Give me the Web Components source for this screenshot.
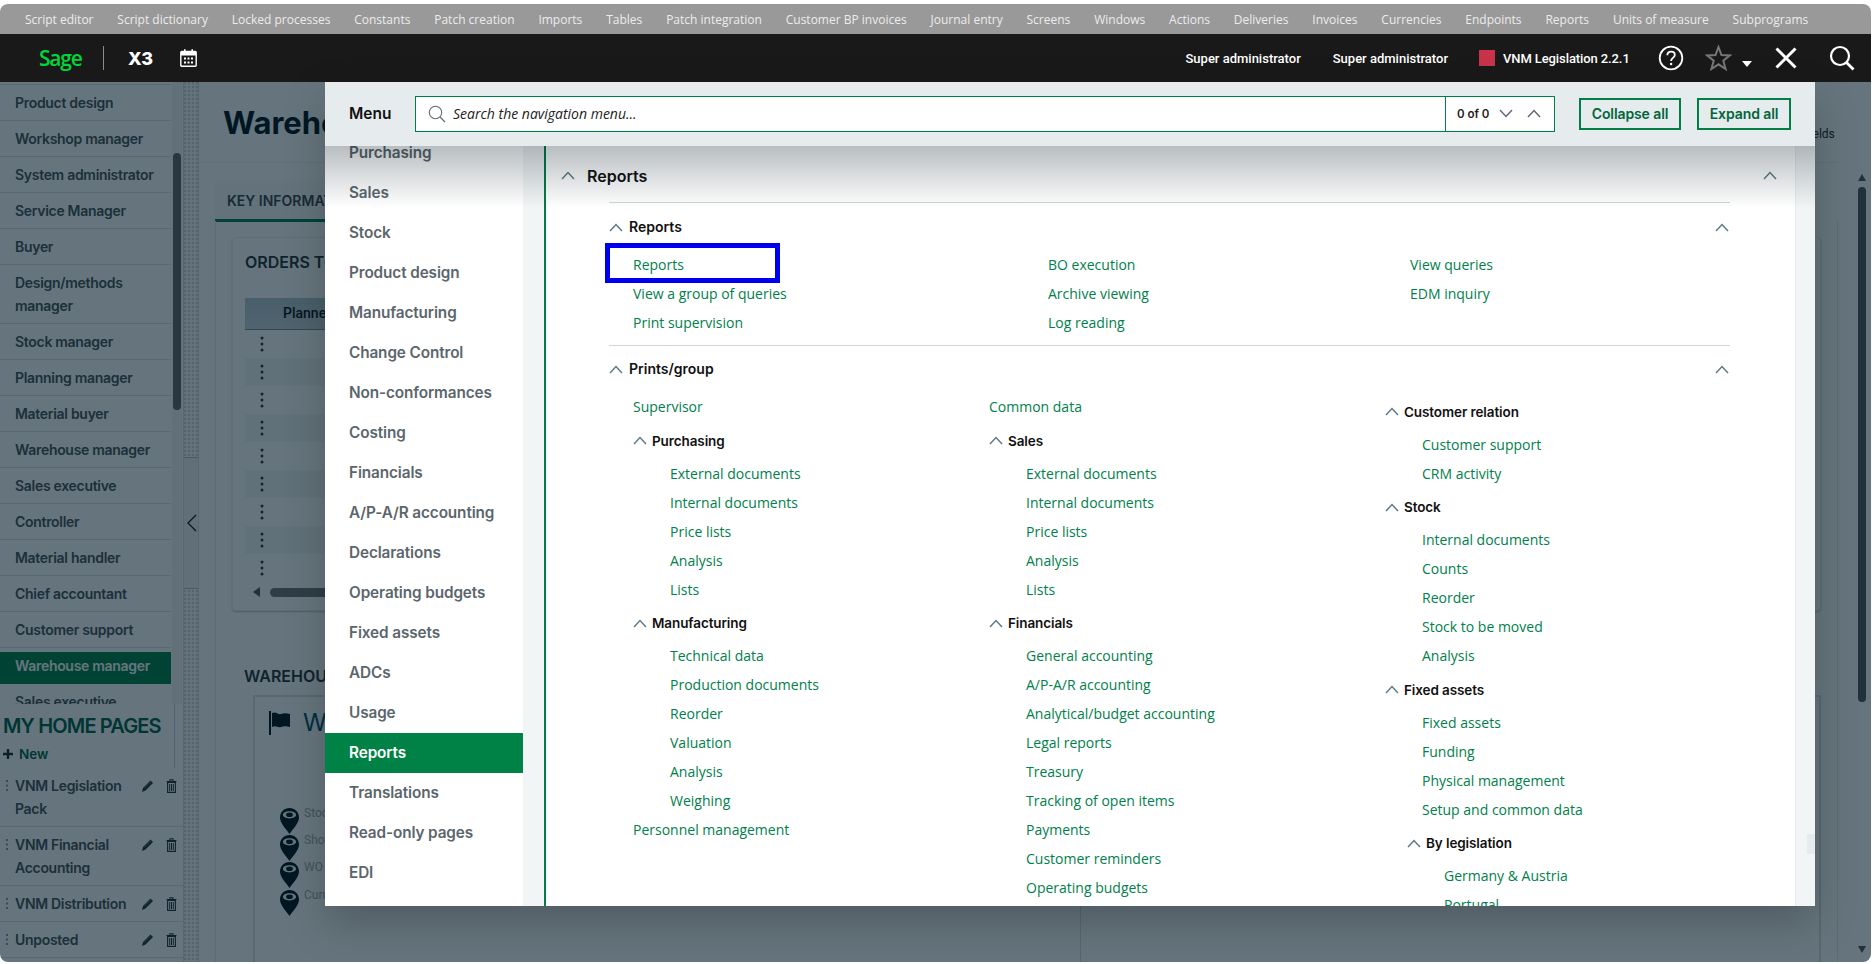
<!DOCTYPE html>
<html lang="en"><head><meta charset="utf-8"><title>Sage X3</title>
<style>
html,body{margin:0;padding:0;background:#fff;width:1872px;height:964px;overflow:hidden;font-family:"Open Sans",sans-serif}
</style></head><body>
<x3-app></x3-app>
<script>
const chevUp=(c='#5f7a87')=>`<svg width="14" height="9" viewBox="0 0 14 9" fill="none" style="display:block;flex:none"><path d="M1 8 L7 1.6 L13 8" stroke="${c}" stroke-width="1.5"/></svg>`;
const chevDown=(c='#5f7a87')=>`<svg width="14" height="9" viewBox="0 0 14 9" fill="none" style="display:block;flex:none"><path d="M1 1 L7 7.4 L13 1" stroke="${c}" stroke-width="1.5"/></svg>`;
class Base extends HTMLElement{
  constructor(){super();this.attachShadow({mode:'open'});}
  connectedCallback(){this.shadowRoot.innerHTML=this.render();}
}
customElements.define('top-links',class extends Base{render(){
  const items=['Script editor','Script dictionary','Locked processes','Constants','Patch creation','Imports','Tables','Patch integration','Customer BP invoices','Journal entry','Screens','Windows','Actions','Deliveries','Invoices','Currencies','Endpoints','Reports','Units of measure','Subprograms'];
  return `<style>:host{display:flex;height:30px;background:#999;color:#ececec;font:12px "Open Sans",sans-serif;align-items:center;gap:23.85px;padding-left:25px;white-space:nowrap;box-sizing:border-box}</style>`+items.map(i=>`<span>${i}</span>`).join('');
}});
customElements.define('app-header',class extends Base{render(){return `<style>
:host{display:flex;height:48px;background:#191919;color:#fff;align-items:center;font:500 13px Roboto,sans-serif;box-sizing:border-box;white-space:nowrap}
.sage{color:#00d639;font:600 21px "Open Sans",sans-serif;letter-spacing:-1.2px;margin-left:39px;width:40px;line-height:48px}
.div{width:1px;height:24px;background:#8c8c8c;margin-left:24px}
.x3{font:800 18px Inter,sans-serif;margin-left:24px;width:28px}
.cal{margin-left:24px;display:block}
.sp{flex:1}
.user{margin-right:32px}
.red{width:16px;height:16px;background:#c8334a;margin-right:8px}
svg{display:block;flex:none}
</style>
<span class="sage">Sage</span><span class="div"></span><span class="x3">X3</span>
<svg class="cal" width="17" height="18" viewBox="0 0 17 18"><rect x=".8" y="2.5" width="15.4" height="14.7" rx="1" fill="none" stroke="#fff" stroke-width="1.4"/><path d="M1 2.5h15v4H1zM4 0.3h1.6v3H4zM11.4 0.3H13v3h-1.6z" fill="#fff"/><path d="M4 8.5h2v2H4zM7.5 8.5h2v2h-2zM11 8.5h2v2h-2zM4 12.5h2v2H4zM7.5 12.5h2v2h-2zM11 12.5h2v2h-2z" fill="#fff"/></svg>
<span class="sp"></span>
<span class="user" style="margin-left:1px">Super administrator</span><span class="user" style="margin-right:31px">Super administrator</span>
<span class="red"></span><span style="width:128px;letter-spacing:-.1px">VNM Legislation 2.2.1</span>
<svg width="26" height="26" viewBox="0 0 26 26" style="margin-left:27px"><circle cx="13" cy="13" r="11.3" fill="none" stroke="#fff" stroke-width="1.8"/><path d="M9.3 10.2c0-2.3 1.7-3.6 3.8-3.6s3.7 1.3 3.7 3.3c0 2.9-3.7 3-3.7 6" fill="none" stroke="#fff" stroke-width="1.8"/><circle cx="13.1" cy="19" r="1.2" fill="#fff"/></svg>
<svg width="27" height="26" viewBox="0 0 27 26" style="margin-left:21px"><path d="M13.5 2 L16.5 10 L25 10.4 L18.3 15.7 L20.6 24 L13.5 19.3 L6.4 24 L8.7 15.7 L2 10.4 L10.5 10Z" fill="none" stroke="#777" stroke-width="2"/></svg>
<svg width="10" height="6" viewBox="0 0 10 6" style="margin-left:10px;margin-top:11px"><path d="M0 0h10L5 6z" fill="#fff"/></svg>
<svg width="24" height="24" viewBox="0 0 24 24" style="margin-left:22px"><path d="M2.5 2.5 L21.5 21.5 M21.5 2.5 L2.5 21.5" stroke="#fff" stroke-width="3" fill="none"/></svg>
<svg width="26" height="26" viewBox="0 0 26 26" style="margin-left:31px;margin-right:16px"><circle cx="11" cy="11" r="9" fill="none" stroke="#fff" stroke-width="2.2"/><path d="M17.5 17.5 L24.5 24.5" stroke="#fff" stroke-width="2.8"/></svg>`;
}});
customElements.define('side-list',class extends Base{render(){
  const items=['Product design','Workshop manager','System administrator','Service Manager','Buyer','Design/methods manager','Stock manager','Planning manager','Material buyer','Warehouse manager','Sales executive','Controller','Material handler','Chief accountant','Customer support','Warehouse manager','Sales executive'];
  return `<style>
:host{display:block;height:622px;overflow:hidden;position:relative;font:600 14px/23px Inter,sans-serif;color:#4a5157}
ul{list-style:none;margin:2px 0 0;padding:0;width:171px;border-top:1px solid #dde1e3}
li{box-sizing:border-box;padding:6px 4px 6px 15px;border-bottom:1px solid #dde1e3;letter-spacing:-.3px}
li:nth-child(16){background:linear-gradient(#fff 4px,#008146 4px);color:#fff;border-bottom:0;height:36px}
.thumb{position:absolute;left:173px;top:71px;width:8px;height:257px;border-radius:4px;background:#666}
.track{position:absolute;left:172px;top:0;bottom:0;width:10px;background:#f4f5f6}
</style><div class="track"></div><div class="thumb"></div><ul>${items.map(i=>`<li>${i}</li>`).join('')}</ul>`;
}});
const pencil=`<svg width="13" height="14" viewBox="0 0 13 14"><path d="M1 13 L2 9 L9.5 1.5 L12 4 L4.5 11.5Z" fill="#27343b"/><path d="M3.4 9.2 L9.8 2.8" stroke="#8a979e" stroke-width=".7"/></svg>`;
const trash=`<svg width="11" height="14" viewBox="0 0 11 14"><path d="M.5 2.5h10M4 2.3V.8h3v1.5M1.6 3.4h7.8v10H1.6z" fill="none" stroke="#27343b" stroke-width="1.1"/><path d="M3.7 5v7M5.5 5v7M7.3 5v7" stroke="#27343b" stroke-width="1"/></svg>`;
const dots=`<svg width="2" height="11" viewBox="0 0 2 11" style="display:block"><path d="M0 0h2v2H0zM0 4.5h2v2H0zM0 9h2v2H0z" fill="#8f969a"/></svg>`;
customElements.define('home-row',class extends Base{render(){return `<style>
:host{display:grid;grid-template-columns:15px 126px 25px 1fr;padding:6px 0;border-bottom:1px solid #dde1e3;font:600 14px/23px Inter,sans-serif;color:#4a5157;letter-spacing:-.3px}
.d{height:23px;display:flex;align-items:center;padding-left:6px}
.i{height:23px;display:flex;align-items:center}
</style><span class="d">${dots}</span><span>${this.getAttribute('label')}</span><span class="i">${pencil}</span><span class="i">${trash}</span>`;}});
customElements.define('home-pages',class extends Base{render(){return `<style>
:host{display:block;height:258px;position:relative}
.top{height:64px;box-sizing:border-box;border-right:1px solid #c5ccd0;width:175px;padding-left:3px}
h2{margin:0;font:600 20px/28px Inter,sans-serif;color:#00624a;letter-spacing:-.85px;padding-top:8px;white-space:nowrap}
.new{display:flex;align-items:center;gap:6px;font:600 13.5px/20px Inter,sans-serif;color:#00624a;margin-top:4px}
</style><div class="top"><h2>MY HOME PAGES</h2><div class="new"><svg width="10" height="10" viewBox="0 0 10 10"><path d="M5 0v10M0 5h10" stroke="#1e2a30" stroke-width="2.4"/></svg>New</div></div>
<home-row label="VNM Legislation Pack"></home-row><home-row label="VNM Financial Accounting"></home-row><home-row label="VNM Distribution"></home-row><home-row label="Unposted"></home-row>`;}});
customElements.define('split-bar',class extends Base{render(){return `<style>
:host{display:block;position:relative;border-left:1px solid #d7dbde;border-right:1px solid #d7dbde;background:#fbfbfb radial-gradient(#9fa6aa .6px,transparent .8px) 3px 3px/4px 4px}
.b{position:absolute;left:0;right:0;top:375px;height:130px;background:#f0f1f2;border-top:1px solid #b5bcc0;border-bottom:1px solid #b5bcc0;display:flex;align-items:center}
</style><div class="b"><svg width="12" height="18" viewBox="0 0 12 18" style="margin-left:2px"><path d="M10 1 L2 9 L10 17" fill="none" stroke="#111" stroke-width="1.2"/></svg></div>`;}});
customElements.define('main-page',class extends Base{render(){
  const rows=Array.from({length:9},(_,i)=>`<div class="r ${i%2?'alt':''}"><svg width="4" height="16" viewBox="0 0 4 16"><circle cx="2" cy="2" r="1.5"/><circle cx="2" cy="8" r="1.5"/><circle cx="2" cy="14" r="1.5"/></svg></div>`).join('');
  const pin=`<svg width="19" height="26" viewBox="0 0 19 26" style="flex:none"><path fill-rule="evenodd" d="M9.5 0c5.2 0 9.5 4 9.5 9.5C19 15 13 21 9.5 26 6 21 0 15 0 9.5 0 4 4.3 0 9.5 0zm0 3.2c-3.8 0-6.6 1.500-6.600 3.600s2.800 3.600 6.600 3.600 6.600-1.500 6.600-3.600-2.800-3.600-6.600-3.600z" fill="#00141e"/><ellipse cx="9.500" cy="6.800" rx="3.400" ry="2.300" fill="#00141e"/></svg>`;
  return `<style>
:host{display:grid;grid-template-columns:1fr 33px;background:#fff;min-width:0;overflow:hidden;font-family:Inter,sans-serif}
.wrap{padding-left:16px;min-width:0}
.title{height:81px;box-sizing:border-box;margin-left:-16px;padding:22px 0 0 24px;border-bottom:1px solid #f0f1f2;display:flex;justify-content:space-between;position:relative}
h1{margin:0;font:700 31px/38px Inter,sans-serif;color:#00141e}
.f{font:12px Roboto,sans-serif;color:#222;position:absolute;left:1604px;top:45px;white-space:nowrap}
.tab{margin-top:18px;width:140px;height:41px;box-sizing:border-box;border-bottom:3px solid #00815a;padding:11px 0 0 12px;font:600 14px/18px Inter,sans-serif;color:#3c464c;white-space:nowrap;overflow:hidden;background:#fafbfb}
.panel{border-left:1px solid #e6e8ea;border-right:1px solid #e6e8ea;padding:16px 16px 0 16px;height:741px;box-sizing:border-box;margin-top:-1px}
.card{border:1px solid #eceeef;border-radius:4px;box-shadow:0 1px 2px rgba(0,0,0,.25);padding:14px 0 0 12px;height:374px;box-sizing:border-box}
h3{margin:0;font:600 16px/20px Inter,sans-serif;color:#2a3338;white-space:nowrap}
.th{margin-top:26px;height:31px;width:1300px;background:linear-gradient(#b4c6d0,#c8d4da);border-bottom:1px solid #7b8e99;font:500 14px/31px Roboto,sans-serif;color:#111;padding-left:38px}
.r{height:28px;width:1300px;display:flex;align-items:center;padding-left:15px}.r svg{fill:#2d383e}.alt{background:#f3f5f6}
.sb{height:20px;display:flex;align-items:center;gap:10px;padding-left:8px}
.sb i{width:0;height:0;border:5px solid transparent;border-right:7px solid #555;border-left:0}
.sb b{height:9px;width:400px;background:#777;border-radius:5px}
.ware{padding:55px 0 0 12px}
.inner{margin-top:9px;margin-left:9px;border:2px solid #dde1e3;height:330px;padding:14px 0 0 14px;display:grid;grid-template-columns:811px 1fr}
.h{display:flex;gap:12px;align-items:center;height:24px;font:400 24px/24px Inter,sans-serif;color:#00506e}
.pins{margin:73px 0 0 11px;display:grid;gap:0}
.p{display:flex;gap:5px;height:27.2px;font:12px/16px Roboto,sans-serif;color:#a8a8a8;white-space:nowrap}
.p span{margin-top:-3px}
.rt{border-left:1px solid #ddd;height:100%}
.vs{position:relative}
.vs b{position:absolute;left:20px;top:105px;width:8px;height:515px;background:#555;border-radius:4px}
.vs i{position:absolute;left:20px;width:0;height:0;border:4.5px solid transparent}
</style>
<div class="wrap"><div class="title"><h1>Warehouse</h1><span class="f">Fields</span></div>
<div class="tab">KEY INFORMATION</div>
<div class="panel"><div class="card"><h3>ORDERS TO</h3><div class="th">Planned</div>${rows}<div class="sb"><i></i><b></b></div></div>
<div class="ware"><h3>WAREHOUSE</h3><div class="inner"><div><div class="h"><svg width="22" height="24" viewBox="0 0 22 24"><path d="M1 0v24" stroke="#00141e" stroke-width="2"/><path d="M3 2c4-2 6 2 9 1s5-1 9 0v13c-4-1-6-1-9 0s-5-2-9 0z" fill="#00141e"/></svg><span>Warehouse</span></div>
<div class="pins"><div class="p">${pin}<span>Stock</span></div><div class="p">${pin}<span>Shop</span></div><div class="p">${pin}<span>WO</span></div><div class="p">${pin}<span>Current</span></div></div></div><div class="rt"></div></div></div></div></div>
<div class="vs"><i style="top:88px;border-bottom:7px solid #555"></i><b></b><i style="top:864px;border-top:7px solid #555"></i></div>`;}});
customElements.define('nav-link',class extends Base{render(){
  const hl=this.hasAttribute('hl');
  return `<style>
:host{display:block;height:29px;font:14px/29px "Open Sans",sans-serif;color:#00804b;white-space:nowrap;position:relative}
.hl{position:absolute;left:-28px;top:-7px;width:175px;height:40px;border:5px solid #0000f0;box-sizing:border-box;pointer-events:none}
</style><slot></slot>${hl?'<div class="hl"></div>':''}`;}});
customElements.define('nav-group',class extends Base{render(){return `<style>
:host{display:block}
:host([nested]){margin-left:-15px}
.h{height:35.5px;padding-top:2px;display:flex;align-items:center;gap:5px;font:600 13.5px/20px Inter,sans-serif;color:#111;white-space:nowrap;box-sizing:content-box;letter-spacing:-.1px}
.b{padding-left:37px}
</style><div class="h">${chevUp()}<span>${this.getAttribute('label')}</span></div><div class="b"><slot></slot></div>`;}});
customElements.define('nav-section',class extends Base{render(){return `<style>
:host{display:block;padding-top:var(--pt,0);padding-bottom:8px;border-bottom:1px solid #ccd6db}
:host([last]){border-bottom:0}
.h{height:46px;display:flex;align-items:center;gap:5px;padding-left:0;font:600 14px/20px Inter,sans-serif;color:#111;padding-right:1px}
.h span{flex:1;padding-left:1px}
.g{display:grid;padding-left:24px;grid-template-columns:${this.getAttribute('cols')}}
</style><div class="h">${chevUp()}<span>${this.getAttribute('label')}</span>${chevUp()}</div><div class="g"><slot></slot></div>`;}});
customElements.define('nav-menu',class extends Base{render(){
  const items=['Purchasing','Sales','Stock','Product design','Manufacturing','Change Control','Non-conformances','Costing','Financials','A/P-A/R accounting','Declarations','Operating budgets','Fixed assets','ADCs','Usage','Reports','Translations','Read-only pages','EDI'];
  return `<style>
:host{display:block;overflow:hidden;background:#fff;font:600 15.3px/40px Inter,sans-serif;color:#5b666c}
ul{list-style:none;margin:-13px 0 0;padding:0}
li{height:40px;padding-left:24px;white-space:nowrap;letter-spacing:-.1px}
.on{background:#008146;color:#fff}
</style><ul>${items.map(i=>`<li class="${i==='Reports'?'on':''}">${i}</li>`).join('')}</ul>`;}});
customElements.define('nav-modal',class extends Base{render(){return `<style>
:host{position:absolute;left:325px;top:0;width:1490px;height:824px;display:grid;grid-template-rows:64px 1fr;background:#fff;box-shadow:0 18px 40px rgba(0,0,0,.22);overflow:visible}
.head{position:relative;z-index:2;background:#e6ebed;display:flex;align-items:center;height:64px}
.head::after{content:"";position:absolute;left:0;right:0;top:100%;height:62px;background:linear-gradient(rgba(0,20,29,.28),rgba(0,20,29,0));pointer-events:none}
.m{font:600 15.5px Inter,sans-serif;color:#111;margin-left:24px;width:66px;margin-top:-2px}
.search{width:1140px;height:36px;box-sizing:border-box;border:1px solid #007e45;background:#fff;display:flex;align-items:center;margin-top:-1px}
.search svg{display:block;flex:none}
.ph{flex:1;font:italic 14px "Open Sans",sans-serif;color:#222;margin-left:7px}
.count{width:109px;height:100%;border-left:1px solid #007e45;display:flex;align-items:center;box-sizing:border-box;padding-left:11px;font:600 11.5px Inter,sans-serif;color:#222}
.count span{width:42px}
.btn{box-sizing:border-box;height:32px;border:2px solid #007e45;color:#00663c;font:600 14px/28px Inter,sans-serif;text-align:center;margin-top:-1px;letter-spacing:-.1px}
.body{display:grid;grid-template-columns:198px 21px 1fr 19px;min-height:0;overflow:hidden}
.strip{background:#f2f5f6;position:relative}
.thumb{position:absolute;right:0;top:688px;width:8px;height:20px;background:#e6ebed}
.content{border-left:2px solid #007e45;border-right:1px solid #e6ebed;overflow:hidden;background:#fff;min-width:0}
.h1{height:56px;box-sizing:border-box;padding:3px 18px 0 15px;display:flex;align-items:center;gap:12px;font:600 16px Inter,sans-serif;color:#111}
.h1 span{flex:1}
.sections{margin:0 65px 0 63px;border-top:1px solid #ccd6db}
</style>
<div class="head"><span class="m">Menu</span>
<div class="search"><svg width="18" height="18" viewBox="0 0 18 18" style="margin-left:12px"><circle cx="7.5" cy="7.5" r="6.2" fill="none" stroke="#5f6b72" stroke-width="1.1"/><path d="M12 12l5 5" stroke="#5f6b72" stroke-width="1.2"/></svg><span class="ph">Search the navigation menu...</span>
<div class="count"><span>0 of 0</span>${chevDown('#667')}<span style="width:14px"></span>${chevUp('#667')}</div></div>
<div class="btn" style="width:102px;margin-left:24px">Collapse all</div><div class="btn" style="width:94px;margin-left:16px">Expand all</div></div>
<div class="body"><nav-menu></nav-menu><div class="strip"></div>
<div class="content"><div class="h1">${chevUp()}<span>Reports</span>${chevUp()}</div>
<div class="sections"><slot></slot></div></div>
<div class="strip"><div class="thumb"></div></div></div>`;}});
customElements.define('x3-app',class extends Base{render(){return `<style>
:host{display:flex;flex-direction:column;box-sizing:border-box;width:1871px;border-radius:8px;overflow:hidden;position:relative;margin-top:4px;height:958px}
.work{flex:1;position:relative;display:grid;grid-template-columns:183px 16px 1fr;min-height:0;background:#fff}
.scrim{position:absolute;inset:0;background:rgba(0,25,38,.6)}
.side{min-width:0;overflow:hidden}
</style>
<top-links></top-links><app-header></app-header>
<div class="work"><div class="side"><side-list></side-list><home-pages></home-pages></div><split-bar></split-bar><main-page></main-page>
<div class="scrim"></div>
<nav-modal>
<nav-section label="Reports" cols="415px 362px 1fr" style="--pt:1px">
<div><nav-link hl>Reports</nav-link><nav-link>View a group of queries</nav-link><nav-link>Print supervision</nav-link></div>
<div><nav-link>BO execution</nav-link><nav-link>Archive viewing</nav-link><nav-link>Log reading</nav-link></div>
<div><nav-link>View queries</nav-link><nav-link>EDM inquiry</nav-link></div>
</nav-section>
<nav-section label="Prints/group" cols="356px 396px 1fr" last>
<div><nav-link>Supervisor</nav-link>
<nav-group label="Purchasing"><nav-link>External documents</nav-link><nav-link>Internal documents</nav-link><nav-link>Price lists</nav-link><nav-link>Analysis</nav-link><nav-link>Lists</nav-link></nav-group>
<nav-group label="Manufacturing"><nav-link>Technical data</nav-link><nav-link>Production documents</nav-link><nav-link>Reorder</nav-link><nav-link>Valuation</nav-link><nav-link>Analysis</nav-link><nav-link>Weighing</nav-link></nav-group>
<nav-link>Personnel management</nav-link></div>
<div><nav-link>Common data</nav-link>
<nav-group label="Sales"><nav-link>External documents</nav-link><nav-link>Internal documents</nav-link><nav-link>Price lists</nav-link><nav-link>Analysis</nav-link><nav-link>Lists</nav-link></nav-group>
<nav-group label="Financials"><nav-link>General accounting</nav-link><nav-link>A/P-A/R accounting</nav-link><nav-link>Analytical/budget accounting</nav-link><nav-link>Legal reports</nav-link><nav-link>Treasury</nav-link><nav-link>Tracking of open items</nav-link><nav-link>Payments</nav-link><nav-link>Customer reminders</nav-link><nav-link>Operating budgets</nav-link></nav-group></div>
<div><nav-group label="Customer relation"><nav-link>Customer support</nav-link><nav-link>CRM activity</nav-link></nav-group>
<nav-group label="Stock"><nav-link>Internal documents</nav-link><nav-link>Counts</nav-link><nav-link>Reorder</nav-link><nav-link>Stock to be moved</nav-link><nav-link>Analysis</nav-link></nav-group>
<nav-group label="Fixed assets"><nav-link>Fixed assets</nav-link><nav-link>Funding</nav-link><nav-link>Physical management</nav-link><nav-link>Setup and common data</nav-link>
<nav-group nested label="By legislation"><nav-link>Germany &amp; Austria</nav-link><nav-link>Portugal</nav-link></nav-group></nav-group></div>
</nav-section>
</nav-modal></div>`;}});
</script>
</body></html>
